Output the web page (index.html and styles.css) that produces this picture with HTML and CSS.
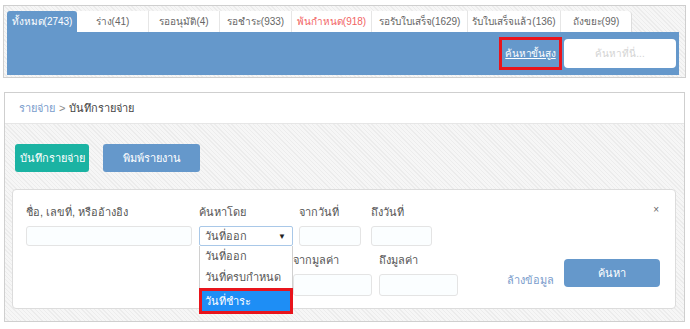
FILE: index.html
```html
<!DOCTYPE html>
<html lang="th">
<head>
<meta charset="utf-8">
<title>รายจ่าย</title>
<link rel="stylesheet" href="styles.css">
</head>
<body>
  <div class="top-panel">
    <div class="tabs">
      <div class="tab tab-active w70">ทั้งหมด(2743)</div>
      <div class="tab w72">ร่าง(41)</div>
      <div class="tab w71">รออนุมัติ(4)</div>
      <div class="tab w72">รอชำระ(933)</div>
      <div class="tab tab-red w80">พ้นกำหนด(918)</div>
      <div class="tab w96">รอรับใบเสร็จ(1629)</div>
      <div class="tab w93">รับใบเสร็จแล้ว(136)</div>
      <div class="tab tab-last w71">ถังขยะ(99)</div>
    </div>
    <div class="toolbar">
      <div class="adv-box"><a class="adv-link" href="#">ค้นหาขั้นสูง</a></div>
      <div class="search-input">ค้นหาที่นี่...</div>
    </div>
  </div>

  <div class="main-panel">
    <div class="crumb"><span class="crumb-link">รายจ่าย</span> <span class="crumb-sep">&gt;</span> <span class="crumb-cur">บันทึกรายจ่าย</span></div>
    <div class="main-body">
      <div class="actions">
        <div class="btn btn-teal">บันทึกรายจ่าย</div>
        <div class="btn btn-blue">พิมพ์รายงาน</div>
      </div>
      <div class="filter-card">
        <span class="close">×</span>
        <div class="row1">
          <div class="field f-name">
            <div class="label">ชื่อ, เลขที่, หรืออ้างอิง</div>
            <div class="input"></div>
          </div>
          <div class="field f-sel">
            <div class="label">ค้นหาโดย</div>
            <div class="select"><span>วันที่ออก</span><span class="caret">▼</span></div>
            <div class="dropdown">
              <div class="opt">วันที่ออก</div>
              <div class="opt">วันที่ครบกำหนด</div>
              <div class="opt opt-sel">วันที่ชำระ</div>
            </div>
          </div>
          <div class="field f-from">
            <div class="label">จากวันที่</div>
            <div class="input"></div>
          </div>
          <div class="field f-to">
            <div class="label">ถึงวันที่</div>
            <div class="input"></div>
          </div>
        </div>
        <div class="row2">
          <div class="field f-val">
            <div class="label">จากมูลค่า</div>
            <div class="input input-tall"></div>
          </div>
          <div class="field f-val">
            <div class="label">ถึงมูลค่า</div>
            <div class="input input-tall"></div>
          </div>
          <a class="clear-link" href="#">ล้างข้อมูล</a>
          <div class="btn btn-search">ค้นหา</div>
        </div>
      </div>
    </div>
  </div>
</body>
</html>
```
FILE: styles.css
```css
* { box-sizing: border-box; }
body {
  margin: 0;
  background: #fff;
  font-family: "Liberation Sans", "Noto Sans", "DejaVu Sans", sans-serif;
  font-size: 11px;
  color: #555;
}
.top-panel {
  margin: 5px 4px 0 3px;
  width: 683px;
  border: 1px solid #cfcfcf;
  background: repeating-linear-gradient(45deg, #f6f6f6 0 2px, #ececec 2px 3px);
  padding: 5px 6px 2px 3px;
}
.tabs { display: flex; height: 21px; }
.tab {
  background: #fff;
  border-right: 1px solid #e6e6e6;
  font-size: 10px;
  color: #666;
  display: flex;
  align-items: center;
  justify-content: center;
  white-space: nowrap;
}
.tab-active { background: #6598cb; color: #fff; border-right: none; border-radius: 3px 3px 0 0; }
.tab-red { color: #f26464; }
.tab-last { border-radius: 0 4px 0 0; border-right: 1px solid #ddd; }
.w70 { width: 70px; } .w71 { width: 71px; } .w72 { width: 72px; }
.w80 { width: 80px; } .w93 { width: 93px; } .w96 { width: 96px; }
.toolbar {
  height: 43px;
  background: #6598cb;
  display: flex;
  justify-content: flex-end;
  align-items: center;
  padding-right: 3px;
  gap: 2px;
}
.adv-box {
  width: 63px;
  height: 33px;
  border: 3px solid #e8141c;
  display: flex;
  align-items: center;
  justify-content: center;
}
.adv-link { color: #fff; font-size: 10px; text-decoration: underline; white-space: nowrap; letter-spacing: -0.2px; }
.search-input {
  width: 112px;
  height: 29px;
  background: #fff;
  border-radius: 4px;
  color: #d3d3d3;
  font-size: 10px;
  display: flex;
  align-items: center;
  justify-content: center;
}
.main-panel {
  margin: 14px 0 0 4px;
  width: 681px;
  border: 1px solid #cfcfcf;
  background: repeating-linear-gradient(45deg, #f6f6f6 0 2px, #ececec 2px 3px);
}
.crumb {
  height: 31px;
  background: #fff;
  border-bottom: 1px solid #e6e6e6;
  padding-left: 14px;
  display: flex;
  align-items: center;
  gap: 4px;
  font-size: 11px;
}
.crumb-link { color: #7a9ccc; }
.crumb-sep { color: #888; }
.crumb-cur { color: #444; }
.main-body { padding: 20px 8px 12px 7px; }
.actions { display: flex; gap: 14px; padding-left: 3px; }
.btn {
  height: 28px;
  border-radius: 3px;
  color: #fff;
  display: flex;
  align-items: center;
  justify-content: center;
  font-size: 11px;
}
.btn-teal { width: 74px; background: #1bb3a3; }
.btn-blue { width: 97px; background: #6598cb; }
.filter-card {
  position: relative;
  margin-top: 17px;
  height: 120px;
  background: #fff;
  border: 1px solid #dcdcdc;
  border-radius: 4px;
  padding: 15px 0 0 13px;
}
.close { position: absolute; top: 14px; right: 16px; font-size: 10px; color: #666; }
.label { height: 14px; line-height: 14px; font-size: 11px; color: #555; white-space: nowrap; margin-bottom: 7px; }
.row1 { display: flex; }
.field { position: relative; }
.f-name { width: 166px; margin-right: 7px; }
.f-sel { width: 94px; margin-right: 6px; }
.f-from { width: 62px; margin-right: 10px; }
.f-to { width: 61px; }
.input {
  height: 20px;
  border: 1px solid #e4e4e4;
  border-radius: 3px;
  background: #fbfeff;
}
.input-tall { height: 22px; }
.select {
  height: 20px;
  border: 1px solid #a9c8e8;
  border-radius: 2px;
  background: #fff;
  display: flex;
  align-items: center;
  justify-content: space-between;
  padding: 0 6px 0 5px;
  font-size: 11px;
  color: #555;
}
.caret { font-size: 8px; color: #222; }
.dropdown {
  position: absolute;
  left: 0;
  top: 41px;
  width: 94px;
  background: #fff;
  border: 1px solid #d0d0d0;
  border-top: none;
  z-index: 2;
}
.opt { height: 21px; line-height: 21px; padding-left: 5px; font-size: 11px; color: #555; white-space: nowrap; }
.opt-sel {
  height: 26px;
  line-height: 20px;
  background: #1e8ef5;
  color: #fff;
  border: 3px solid #e8141c;
  padding-left: 3px;
  margin: 0 -1px -1px -1px;
}
.row2 { display: flex; align-items: flex-end; margin-top: 7px; padding-left: 267px; }
.row2 .f-val { width: 79px; }
.row2 .f-val + .f-val { margin-left: 7px; }
.clear-link { color: #7a9ccc; text-decoration: none; font-size: 11px; margin-left: 49px; margin-bottom: 7px; white-space: nowrap; }
.btn-search { width: 96px; background: #6598cb; margin-left: 10px; margin-bottom: 9px; border-radius: 4px; }
```
